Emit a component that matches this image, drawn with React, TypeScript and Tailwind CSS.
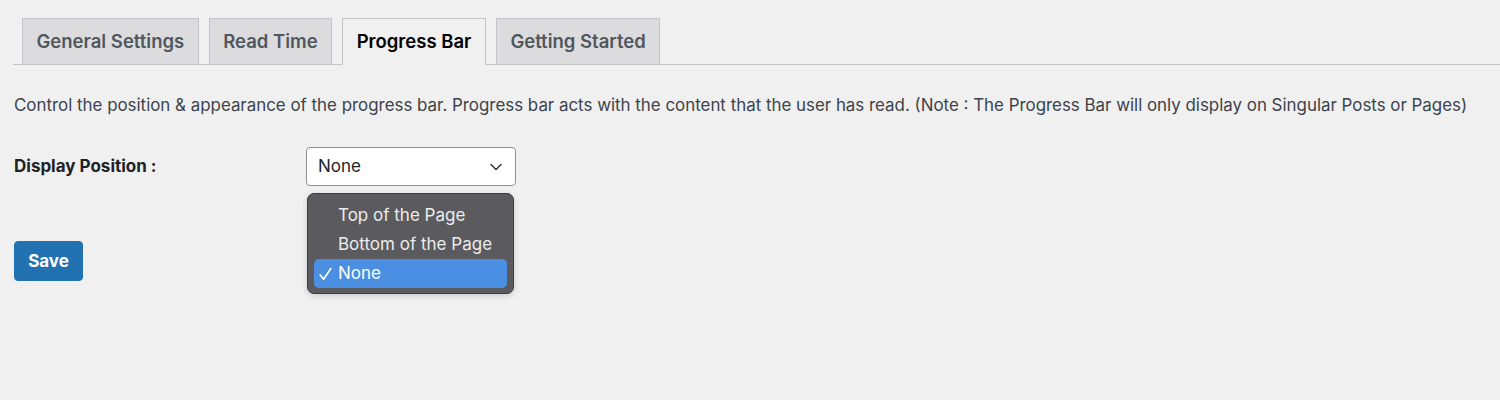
import { ChevronDown } from "lucide-react";

const tabs = ["General Settings", "Read Time", "Progress Bar", "Getting Started"];
const activeTab = "Progress Bar";

const options = ["Top of the Page", "Bottom of the Page", "None"];
const selected = "None";

export default function App() {
  return (
    <div className="h-[400px] w-full bg-[#f0f0f1] font-['Inter','Liberation_Sans',sans-serif] text-[#3c434a]">
      <div className="ml-[13px] flex gap-[10px] border-b border-[#c3c4c7] pl-[9px] pt-[18px]">
        {tabs.map((tab) => (
          <div
            key={tab}
            className={
              tab === activeTab
                ? "-mb-px flex h-[47px] items-center border border-[#c3c4c7] border-b-[#f0f0f1] bg-[#f0f0f1] px-[13.5px] text-[18.5px] font-semibold text-black"
                : "-mb-px flex h-[47px] items-center border border-[#c3c4c7] bg-[#dcdcde] px-[13.5px] text-[18.5px] font-semibold text-[#50575e]"
            }
          >
            {tab}
          </div>
        ))}
      </div>

      <p className="mt-[28px] pl-[14px] text-[16.9px] text-[#3c434a]">
        Control the position &amp; appearance of the progress bar. Progress bar acts with the content that the user has read. (Note : The Progress Bar will only display on Singular Posts or Pages)
      </p>

      <div className="mt-[29px] flex items-start pl-[14px]">
        <div className="flex w-[292px] flex-col">
          <div className="flex h-[39px] items-center text-[17px] font-bold text-[#1d2327]">
            Display Position :
          </div>
          <button
            type="button"
            className="mt-[55px] h-[40px] w-[69px] rounded-[4px] border border-[#2271b1] bg-[#2271b1] text-[17px] font-bold text-white"
          >
            Save
          </button>
        </div>

        <div className="relative w-[210px]">
          <div className="flex h-[39px] items-center justify-between rounded-[4px] border border-[#8c8f94] bg-white pl-[11px] pr-[9px] text-[17px] text-[#1d2327]">
            <span>{selected}</span>
            <ChevronDown className="h-[20px] w-[20px] text-[#2c3338]" strokeWidth={1.75} />
          </div>

          <div className="absolute left-px top-[46px] w-[207px] rounded-[7px] border border-[#3d3d40] bg-[#5b5b5f] px-[6px] pb-[5px] pt-[7px] shadow-[0_2px_6px_rgba(0,0,0,0.15)]">
            {options.map((opt) => (
              <div
                key={opt}
                className={
                  opt === selected
                    ? "flex h-[29px] items-center rounded-[5px] bg-[#4a8fe2] pl-[5px] text-[17px] text-white"
                    : "flex h-[29px] items-center pl-[5px] text-[17px] text-[#ececec]"
                }
              >
                <span className="flex w-[19px] items-center">
                  {opt === selected ? (
                    <svg width="13" height="14" viewBox="0 0 13 14" fill="none">
                      <path d="M1.2 8 L4.6 12.2 L11.8 1.6" stroke="currentColor" strokeWidth="1.7" strokeLinecap="round" strokeLinejoin="round" />
                    </svg>
                  ) : null}
                </span>
                <span>{opt}</span>
              </div>
            ))}
          </div>
        </div>
      </div>
    </div>
  );
}
